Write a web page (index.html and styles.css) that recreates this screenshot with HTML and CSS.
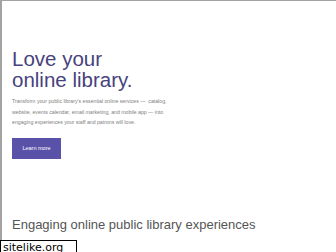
FILE: index.html
```html
<!DOCTYPE html>
<html lang="en">
<head>
<meta charset="utf-8">
<title>Love your online library</title>
<link rel="stylesheet" href="styles.css">
</head>
<body>
<div class="frame">
  <section class="hero">
    <h1 class="hero-title">Love your<br>online library.</h1>
    <p class="hero-text">Transform your public library's essential online services — &nbsp;catalog, website, events calendar, email marketing, and mobile app — into engaging experiences your staff and patrons will love.</p>
    <a class="btn" href="#">Learn more</a>
  </section>
  <section class="features">
    <h2 class="features-title">Engaging online public library experiences</h2>
  </section>
</div>
<div class="badge">sitelike.org</div>
</body>
</html>
```
FILE: styles.css
```css
html, body {
  margin: 0;
  padding: 0;
  background: #fff;
  overflow: hidden;
}
body {
  width: 336px;
  height: 252px;
  position: relative;
  font-family: "Liberation Sans", Arial, sans-serif;
}
.frame {
  box-sizing: border-box;
  height: 241px;
  border-top: 1px solid #a3a3a3;
  border-left: 2px solid #a3a3a3;
  padding-left: 10px;
}
.hero {
  padding-top: 48px;
  display: flex;
  flex-direction: column;
  align-items: flex-start;
}
.hero-title {
  margin: 0;
  font-size: 20.5px;
  line-height: 20.5px;
  font-weight: normal;
  color: #47427d;
}
.hero-text {
  margin: 6px 0 0;
  width: 166px;
  font-size: 5.2px;
  line-height: 10.5px;
  color: #808080;
}
.btn {
  margin-top: 10px;
  width: 49px;
  height: 21px;
  display: flex;
  align-items: center;
  justify-content: center;
  background: #5a52a8;
  color: #fff;
  font-size: 5.5px;
  text-decoration: none;
}
.features {
  padding-top: 58px;
}
.features-title {
  margin: 0;
  font-size: 13px;
  line-height: 15px;
  font-weight: normal;
  color: #555;
}
.badge {
  position: absolute;
  left: 0;
  top: 240px;
  width: 77px;
  height: 14px;
  border: 1px solid #000;
  background: #fff;
  color: #000;
  font-family: "DejaVu Sans", sans-serif;
  font-size: 11px;
  line-height: 13px;
  padding-left: 2px;
  box-sizing: border-box;
}
```
